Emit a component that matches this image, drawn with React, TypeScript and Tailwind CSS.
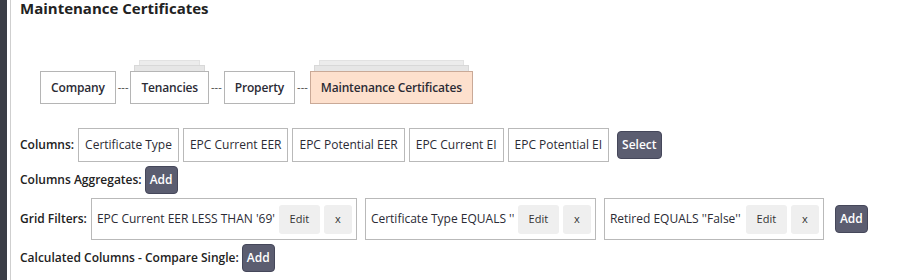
import React from 'react';

const font = "font-['Open_Sans','Liberation_Sans',sans-serif]";

const Tab: React.FC<{ label: string; stacked?: boolean; active?: boolean }> = ({ label, stacked, active }) => (
  <div className="flex flex-col items-stretch">
    {stacked && (
      <>
        <div className="mx-[9px] h-[5px] border border-b-0 border-[#e2e2e2] bg-[#ececec]" />
        <div className="mx-[4px] h-[6px] border border-b-0 border-[#d8d8d8] bg-[#e6e6e6]" />
      </>
    )}
    <div
      className={
        'flex h-[33px] items-center border px-[10px] text-[12px] font-semibold tracking-[-0.15px] text-[#2b2b35] ' +
        (active ? 'border-[#c9a997] bg-[#fde0cd]' : 'border-[#b5b5b5] bg-white')
      }
    >
      {label}
    </div>
  </div>
);

const Dash = () => <div className="mb-[12px] px-[2px] text-[11px] leading-[11px] text-[#444]">---</div>;

const Chip: React.FC<{ label: string }> = ({ label }) => (
  <div className="flex h-[34px] items-center border border-[#b9b9b9] px-[6px] text-[12px] text-[#2b2b35]">{label}</div>
);

const DarkBtn: React.FC<{ label: string; className?: string }> = ({ label, className }) => (
  <div
    className={
      'flex h-[28px] items-center rounded-[4px] border border-[#45475a] bg-[#5b5d70] px-[4px] text-[12px] font-semibold text-white ' +
      (className ?? '')
    }
  >
    {label}
  </div>
);

const Filter: React.FC<{ text: string; width: string }> = ({ text, width }) => (
  <div className={'flex h-[42px] items-center border border-[#b9b9b9] pl-[5px] pr-[4px] ' + width}>
    <span className="min-w-0 flex-1 overflow-hidden whitespace-nowrap text-[12px] text-[#2b2b35]">{text}</span>
    <div className="ml-[4px] flex h-[29px] w-[41px] shrink-0 items-center justify-center rounded-[3px] bg-[#efefef] text-[11px] text-[#333]">Edit</div>
    <div className="ml-[4px] flex h-[29px] w-[28px] shrink-0 items-center justify-center rounded-[3px] bg-[#efefef] text-[11px] text-[#333]">x</div>
  </div>
);

export default function App() {
  return (
    <div className={'flex h-[280px] w-[924px] overflow-hidden bg-white ' + font}>
      <div className="w-[7px] bg-[#3b3e46]" />
      <div className="w-[3px]" />
      <div className="w-px bg-[#cfcfcf]" />
      <div className="flex flex-1 flex-col pl-[9px]">
        <h1 className="text-[15px] font-bold leading-[16px] text-[#222]">Maintenance Certificates</h1>

        <div className="mt-[44px] flex items-end pl-[20px]">
          <Tab label="Company" />
          <Dash />
          <Tab label="Tenancies" stacked />
          <Dash />
          <Tab label="Property" />
          <Dash />
          <Tab label="Maintenance Certificates" stacked active />
        </div>

        <div className="mt-[24px] flex items-center gap-[4px]">
          <span className="text-[12px] font-semibold text-[#222]">Columns:</span>
          <Chip label="Certificate Type" />
          <Chip label="EPC Current EER" />
          <Chip label="EPC Potential EER" />
          <Chip label="EPC Current EI" />
          <Chip label="EPC Potential EI" />
          <DarkBtn label="Select" className="ml-[4px]" />
        </div>

        <div className="mt-[4px] flex items-center gap-[3px]">
          <span className="text-[12px] font-semibold text-[#222]">Columns Aggregates:</span>
          <DarkBtn label="Add" />
        </div>

        <div className="mt-[4px] flex items-center gap-[8px]">
          <span className="mr-[-4px] text-[12px] font-semibold text-[#222]">Grid Filters:</span>
          <Filter text="EPC Current EER LESS THAN '69'" width="w-[266px]" />
          <Filter text={"Certificate Type EQUALS ''"} width="w-[231px]" />
          <Filter text={"Retired EQUALS ''False''"} width="w-[220px]" />
          <DarkBtn label="Add" className="ml-[3px]" />
        </div>

        <div className="mt-[4px] flex items-center gap-[3px]">
          <span className="text-[12px] font-semibold text-[#222]">Calculated Columns - Compare Single:</span>
          <DarkBtn label="Add" />
        </div>
      </div>
    </div>
  );
}
